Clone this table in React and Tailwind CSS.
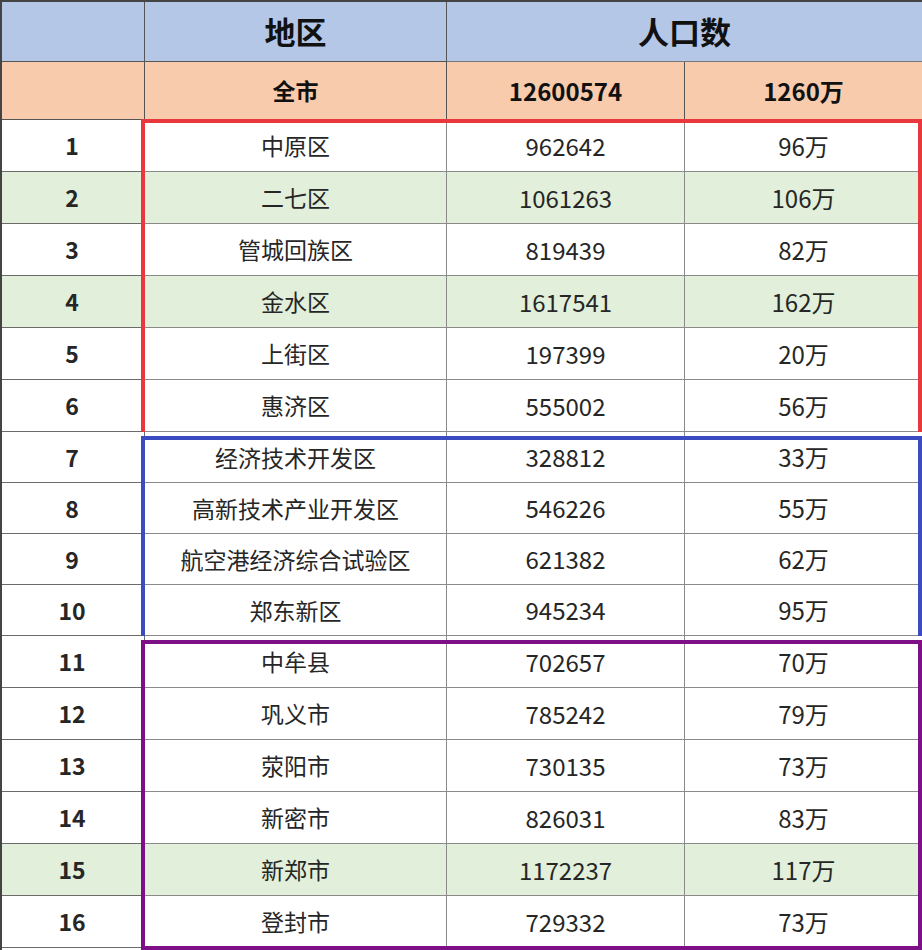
import React from 'react';

// 郑州各区县人口表
const groups = [
    {
        color: 'border-[#e8383d]',
        box: 'top-[-1px] bottom-[-4px]',
        rows: [
            { n: 1, name: '中原区', pop: '962642', wan: '96万' },
            { n: 2, name: '二七区', pop: '1061263', wan: '106万', green: true },
            { n: 3, name: '管城回族区', pop: '819439', wan: '82万' },
            { n: 4, name: '金水区', pop: '1617541', wan: '162万', green: true },
            { n: 5, name: '上街区', pop: '197399', wan: '20万' },
            { n: 6, name: '惠济区', pop: '555002', wan: '56万' },
        ],
    },
    {
        color: 'border-[#3a4cc0]',
        box: 'top-[4px] bottom-[-4px]',
        rows: [
            { n: 7, name: '经济技术开发区', pop: '328812', wan: '33万' },
            { n: 8, name: '高新技术产业开发区', pop: '546226', wan: '55万' },
            { n: 9, name: '航空港经济综合试验区', pop: '621382', wan: '62万' },
            { n: 10, name: '郑东新区', pop: '945234', wan: '95万' },
        ],
    },
    {
        color: 'border-[#7d0f87]',
        box: 'top-[4px] bottom-[-2px]',
        rows: [
            { n: 11, name: '中牟县', pop: '702657', wan: '70万' },
            { n: 12, name: '巩义市', pop: '785242', wan: '79万' },
            { n: 13, name: '荥阳市', pop: '730135', wan: '73万' },
            { n: 14, name: '新密市', pop: '826031', wan: '83万' },
            { n: 15, name: '新郑市', pop: '1172237', wan: '117万', green: true },
            { n: 16, name: '登封市', pop: '729332', wan: '73万' },
        ],
    },
];

const font = { fontFamily: '"Noto Sans CJK SC", "Noto Sans", sans-serif' };

function Row({ row, h }) {
    const bg = row.green ? 'bg-[#e2efda]' : 'bg-white';
    return (
        <div className={`grid grid-cols-[145px_302px_238px_237px] ${h} ${bg} text-[#262626]`}>
            <div className="flex items-center justify-center border-r border-b border-[#6b6b6b] text-[23px] font-bold">{row.n}</div>
            <div className="flex items-center justify-center border-r border-b border-[#8a8a8a] text-[23px]">{row.name}</div>
            <div className="flex items-center justify-center border-r border-b border-[#8a8a8a] text-[24px]">{row.pop}</div>
            <div className="flex items-center justify-center border-b border-[#8a8a8a] text-[24px]">{row.wan}</div>
        </div>
    );
}

export default function App() {
    return (
        <div className="w-[922px] h-[950px] overflow-hidden bg-white border-l-2 border-t-2 border-[#444]" style={font}>
            {/* 表头 */}
            <div className="grid grid-cols-[143px_302px_475px] h-[60px] bg-[#b4c7e7] text-[31px] font-bold text-[#111]">
                <div className="border-r border-b border-[#555]" />
                <div className="flex items-center justify-center border-r border-b border-[#555]">地区</div>
                <div className="flex items-center justify-center border-b border-[#777]">人口数</div>
            </div>
            <div className="grid grid-cols-[143px_302px_238px_237px] h-[58px] bg-[#f8cbad] text-[24px] font-bold text-[#111]">
                <div className="border-r border-b border-[#555]" />
                <div className="flex items-center justify-center border-r border-b border-[#555] text-[23px]">全市</div>
                <div className="flex items-center justify-center border-r border-b border-[#555]">12600574</div>
                <div className="flex items-center justify-center border-b border-[#555]">1260万</div>
            </div>

            {groups.map((g, gi) => (
                <div key={gi} className="relative -ml-[2px]">
                    {g.rows.map((r) => (
                        <Row key={r.n} row={r} h={gi === 1 ? 'h-[51px]' : 'h-[52px]'} />
                    ))}
                    {/* 分组框 */}
                    <div className={`absolute left-[141px] right-0 ${g.box} border-[4px] ${g.color} pointer-events-none`} />
                </div>
            ))}
        </div>
    );
}
